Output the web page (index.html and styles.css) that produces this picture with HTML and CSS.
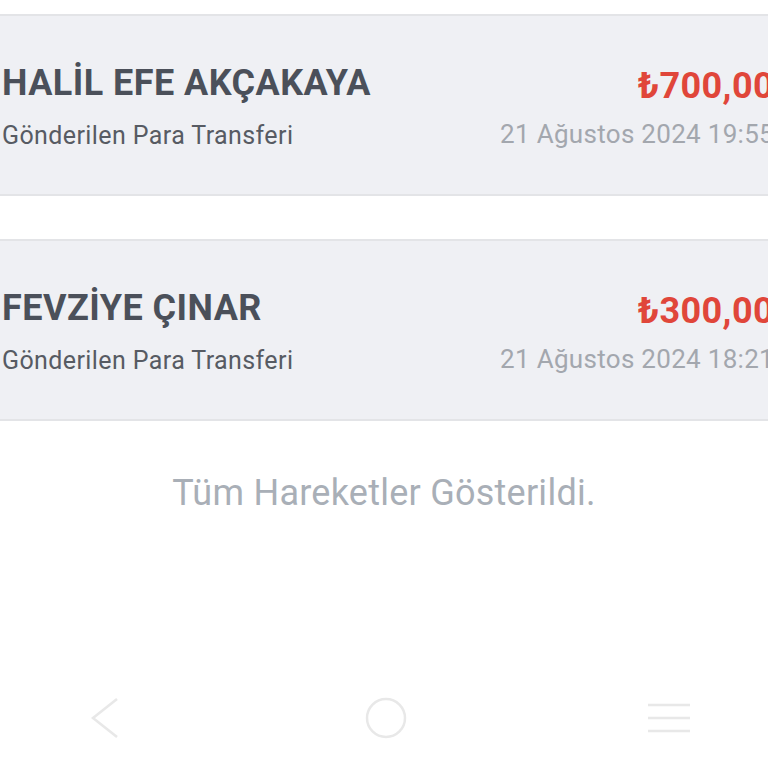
FILE: index.html
```html
<!DOCTYPE html>
<html lang="tr">
<head>
    <meta charset="UTF-8">
    <meta name="viewport" content="width=device-width, initial-scale=1.0">
    <title>Hesap Hareketleri</title>
    <link rel="stylesheet" href="styles.css">
</head>
<body>
    <div class="list">
        <div class="item">
            <div class="left">
                <div class="name">HALİL EFE AKÇAKAYA</div>
                <div class="desc">Gönderilen Para Transferi</div>
            </div>
            <div class="right">
                <div class="amount">₺700,00</div>
                <div class="date">21 Ağustos 2024 19:55</div>
            </div>
        </div>
        <div class="item">
            <div class="left">
                <div class="name">FEVZİYE ÇINAR</div>
                <div class="desc">Gönderilen Para Transferi</div>
            </div>
            <div class="right">
                <div class="amount">₺300,00</div>
                <div class="date">21 Ağustos 2024 18:21</div>
            </div>
        </div>
    </div>
    <div class="end-note">Tüm Hareketler Gösterildi.</div>

    <div class="navbar">
        <svg class="nav-icon" width="40" height="44" viewBox="0 0 40 44">
            <polyline points="32,3 8,22 32,41" fill="none" stroke="#e8e8e8" stroke-width="2.5"/>
        </svg>
        <svg class="nav-icon" width="44" height="44" viewBox="0 0 44 44">
            <ellipse cx="22" cy="22" rx="19" ry="19" fill="none" stroke="#e8e8e8" stroke-width="2.5"/>
        </svg>
        <svg class="nav-icon" width="46" height="44" viewBox="0 0 46 44">
            <line x1="2" y1="9" x2="44" y2="9" stroke="#e8e8e8" stroke-width="2.5"/>
            <line x1="2" y1="22" x2="44" y2="22" stroke="#e8e8e8" stroke-width="2.5"/>
            <line x1="2" y1="35" x2="44" y2="35" stroke="#e8e8e8" stroke-width="2.5"/>
        </svg>
    </div>
</body>
</html>
```

FILE: styles.css
```css
body {
    font-family: Roboto, "Noto Sans", Arial, sans-serif;
    background-color: #fff;
    margin: 0;
    padding: 0;
    width: 768px;
    height: 768px;
    overflow: hidden;
    display: flex;
    flex-direction: column;
}
.list {
    display: flex;
    flex-direction: column;
    gap: 43px;
    padding-top: 14px;
}
.item {
    display: flex;
    justify-content: space-between;
    align-items: flex-start;
    height: 182px;
    box-sizing: border-box;
    background-color: #eff0f4;
    border-top: 2px solid #e3e4e7;
    border-bottom: 2px solid #e3e4e7;
    padding: 46px 0 0 2px;
    margin-right: -6px;
}
.name {
    font-size: 36px;
    font-weight: bold;
    color: #4b505a;
    line-height: 42px;
    letter-spacing: 0.45px;
}
.desc {
    font-size: 25px;
    color: #575b63;
    line-height: 30px;
    margin-top: 17px;
    letter-spacing: 0.4px;
}
.right {
    display: flex;
    flex-direction: column;
    align-items: flex-end;
    margin-top: 3px;
}
.amount {
    font-size: 36px;
    font-weight: bold;
    color: #e0463a;
    line-height: 42px;
    letter-spacing: 0.4px;
}
.date {
    font-size: 26px;
    color: #a3a7ae;
    line-height: 30px;
    margin-top: 12px;
    letter-spacing: 0.3px;
}
.end-note {
    text-align: center;
    font-size: 36px;
    color: #a9afb7;
    line-height: 42px;
    margin-top: 51px;
    letter-spacing: 0.25px;
}
.navbar {
    display: flex;
    justify-content: space-between;
    align-items: center;
    margin-top: auto;
    height: 100px;
    padding: 0 76px 0 85px;
}
```
